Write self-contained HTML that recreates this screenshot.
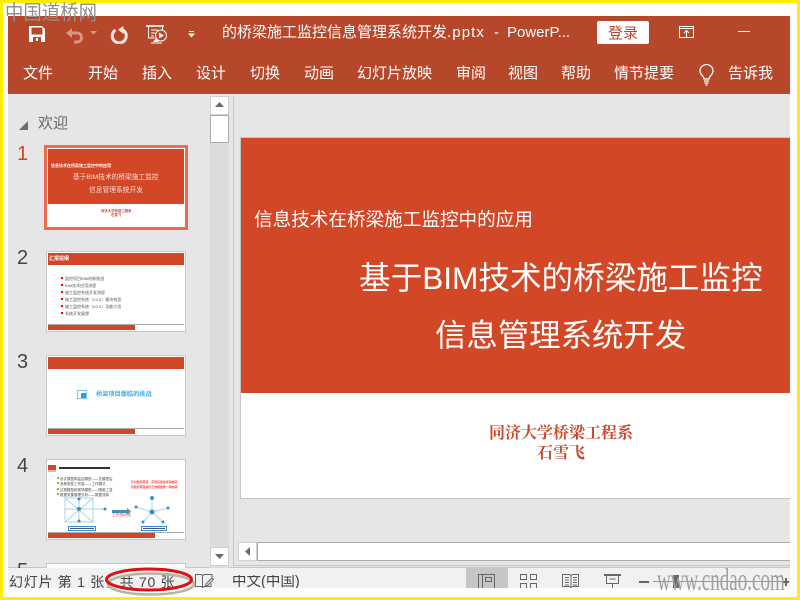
<!DOCTYPE html>
<html lang="zh">
<head>
<meta charset="utf-8">
<style>
html,body{margin:0;padding:0;width:800px;height:600px;overflow:hidden;background:#fff}
body{position:relative;font-family:"Liberation Sans","Noto Sans CJK SC",sans-serif}
.a,.t,svg{position:absolute}
.t{white-space:nowrap;line-height:1}
.m{color:#fff;font-size:15px;top:66px}
.n{color:#444;font-size:20px;left:17px}
.thumb{position:absolute;left:46px;width:140px;height:81px;background:#fff;border:1px solid #c6c6c6;box-sizing:border-box;overflow:hidden}
.bar1{position:absolute;left:1px;top:1px;width:136px;height:12px;background:#d24726}
.bar2{position:absolute;left:1px;top:73px;width:87px;height:5px;background:#d24726}
.line{position:absolute;left:1px;top:72px;width:136px;height:1px;background:#aaa}
.tiny{position:absolute;white-space:nowrap;line-height:1;font-size:5px}
.b{position:absolute;width:2px;height:2px;background:#e00}
</style>
</head>
<body>
<!-- yellow frame -->
<div class="a" style="left:0;top:0;width:800px;height:3px;background:#ffee00"></div>
<div class="a" style="left:0;top:0;width:3px;height:600px;background:#ffee00"></div>
<div class="a" style="right:0;top:0;width:3px;height:600px;background:#ffee00"></div>
<div class="a" style="left:0;top:597px;width:800px;height:3px;background:#ffee00"></div>

<!-- app chrome -->
<div class="a" style="left:8px;top:16px;width:782px;height:78px;background:#b7472a"></div>
<div class="a" style="left:8px;top:94px;width:782px;height:474px;background:#e6e6e6"></div>
<div class="a" style="left:8px;top:568px;width:782px;height:20px;background:#f1f1f1"></div>
<div class="a" style="left:8px;top:567px;width:782px;height:1px;background:#c6c6c6"></div>

<!-- watermark -->
<div class="t" style="left:5px;top:3px;font-size:18.400px;color:#8f8f8f;z-index:5;transform:scaleY(1.1);transform-origin:left top">中国道桥网</div>

<!-- QAT icons -->
<svg style="left:29px;top:26px" width="16" height="16" viewBox="0 0 16 16"><path fill="#fff" fill-rule="evenodd" d="M0 0h13l3 3v13H0zM2.500 1.500v7h11v-7zM4 11v5h8v-5zM7 12h2v3H7z"/></svg>
<svg style="left:65px;top:27px" width="33" height="17" viewBox="0 0 33 17"><path fill="none" stroke="#d8957f" stroke-width="3" d="M5 6h7c6 0 6 9 0 9h-3"/><path fill="#d8957f" d="M1 6l6-5v10z"/><path fill="#d8957f" d="M25 4h7l-3.500 3.500z"/></svg>
<svg style="left:110px;top:25px" width="18" height="19" viewBox="0 0 18 19"><path fill="none" stroke="#f2e5e0" stroke-width="3" d="M5.500 5a7 7 0 1 0 7.500 0"/><path fill="#f2e5e0" d="M13.500 1v8L8 4.500z"/></svg>
<svg style="left:146px;top:25px" width="22" height="19" viewBox="0 0 22 19"><path fill="none" stroke="#fff" stroke-width="1.500" d="M0 1h18"/><path fill="none" stroke="#fff" d="M2.500 1v12h6M16.500 1v4M5 5h7M5 8h4M5 11h3"/><circle cx="15" cy="10.500" r="5.500" fill="none" stroke="#fff"/><path fill="#fff" d="M13 7.500l5 3-5 3zM7 17l3-4 3 4z"/><path stroke="#fff" d="M5 18h11"/></svg>
<svg style="left:188px;top:30px" width="8" height="8" viewBox="0 0 8 8"><path stroke="#fff" d="M1 1.500h5"/><path fill="#fff" d="M0 3.500h7L3.500 7.500z"/></svg>

<!-- title -->
<div class="t" style="left:222px;top:25px;font-size:15px;color:#fff">的桥梁施工监控信息管理系统开发</div>
<div class="t" style="left:447px;top:25px;font-size:15px;color:#fff;letter-spacing:1.100px">.pptx</div>
<div class="t" style="left:494px;top:25px;font-size:15px;color:#fff">-</div>
<div class="t" style="left:507px;top:25px;font-size:15px;color:#fff">PowerP...</div>
<div class="a" style="left:597px;top:21px;width:52px;height:23px;background:#fff;border-radius:2px"></div>
<div class="t" style="left:608px;top:26px;font-size:15px;color:#b7472a">登录</div>
<svg style="left:679px;top:26px" width="16" height="13" viewBox="0 0 16 13"><path fill="none" stroke="#fff" d="M.500 .500h14v11H.500zM.500 2.500h14M7.500 11V5M5 7l2.500-2.500L10 7"/></svg>
<div class="a" style="left:738px;top:31px;width:12px;height:1px;background:#fff"></div>

<!-- ribbon tabs -->
<div class="t m" style="left:23px">文件</div>
<div class="t m" style="left:88px">开始</div>
<div class="t m" style="left:142px">插入</div>
<div class="t m" style="left:196px">设计</div>
<div class="t m" style="left:250px">切换</div>
<div class="t m" style="left:304px">动画</div>
<div class="t m" style="left:357px">幻灯片放映</div>
<div class="t m" style="left:456px">审阅</div>
<div class="t m" style="left:508px">视图</div>
<div class="t m" style="left:561px">帮助</div>
<div class="t m" style="left:614px">情节提要</div>
<svg style="left:698px;top:64px" width="18" height="22" viewBox="0 0 18 22"><path fill="none" stroke="#fff" stroke-width="1.300" d="M6 15c0-3-4-4-4-8a6.500 6.500 0 0 1 13 0c0 4-4 5-4 8z"/><path stroke="#fff" stroke-width="1.300" d="M6 17h5M6.500 19h4M7.500 21h2"/></svg>
<div class="t m" style="left:728px">告诉我</div>

<!-- thumbnail pane -->
<svg style="left:19px;top:121px" width="10" height="10" viewBox="0 0 10 10"><path fill="#6e6e6e" d="M9 0v9H0z"/></svg>
<div class="t" style="left:38px;top:116px;font-size:15px;color:#6a6a6a">欢迎</div>
<div class="t n" style="left:17px;top:144px;color:#c8492a">1</div>
<div class="t n" style="top:248px">2</div>
<div class="t n" style="top:352px">3</div>
<div class="t n" style="top:456px">4</div>
<div class="t n" style="top:561px;height:7px;overflow:hidden">5</div>

<!-- thumb 1 -->
<div class="a" style="left:44px;top:145px;width:144px;height:85px;background:#ee6c4d"></div>
<div class="a" style="left:47px;top:148px;width:138px;height:79px;background:#fff"></div>
<div class="a" style="left:48px;top:149px;width:136px;height:55px;background:#d24726"></div>
<div class="tiny" style="left:51px;top:164px;color:#fff;font-size:4px;font-weight:bold">信息技术在桥梁施工监控中的应用</div>
<div class="tiny" style="left:73px;top:175px;color:#f6dcd5;font-size:6.700px">基于BIM技术的桥梁施工监控</div>
<div class="tiny" style="left:89px;top:188px;color:#f6dcd5;font-size:6.750px">信息管理系统开发</div>
<div class="tiny" style="left:101px;top:210px;color:#c8492a;font-size:3.400px;font-weight:bold">同济大学桥梁工程系</div>
<div class="tiny" style="left:111px;top:214px;color:#c8492a;font-size:3.400px;font-weight:bold">石雪飞</div>

<!-- thumb 2 -->
<div class="thumb" style="top:251px">
  <div class="bar1"></div><div class="line"></div><div class="bar2"></div>
  <div class="tiny" style="left:2px;top:5px;color:#fff;font-size:5px;font-weight:bold">汇报提纲</div>
  <div class="b" style="left:14px;top:25px"></div><div class="b" style="left:14px;top:32px"></div><div class="b" style="left:14px;top:39px"></div><div class="b" style="left:14px;top:46px"></div><div class="b" style="left:14px;top:53px"></div><div class="b" style="left:14px;top:60px"></div>
  <div class="tiny" style="left:18px;top:23px;color:#555;line-height:7px;font-size:4px">监控项目BIM的新挑战<br>BIM技术应用流程<br>施工监控系统开发流程<br>施工监控系统（V2.0）模块构思<br>施工监控系统（V2.0）功能介绍<br>系统开发展望</div>
</div>

<!-- thumb 3 -->
<div class="thumb" style="top:355px">
  <div class="bar1"></div><div class="line"></div><div class="bar2"></div>
  <div class="a" style="left:30px;top:34px;width:8px;height:7px;border:1px solid #7cc4e8;background:#fff"></div>
  <div class="a" style="left:34px;top:37px;width:5px;height:5px;background:#3d9ad1"></div>
  <div class="tiny" style="left:49px;top:36px;color:#45b0e4;font-size:6.200px;font-weight:bold">桥梁项目面临的挑战</div>
</div>

<!-- thumb 4 -->
<div class="thumb" style="top:459px">
  <div class="tiny" style="left:13px;top:17px;color:#444;line-height:5.300px;font-size:3.500px">设计模型和监控模型——先模型后<br>多种类型工作量——工作模式<br>过程模型和现场模型——随施工变<br>数据采集管理分析——数据流转</div>
  <div class="tiny" style="left:84px;top:20px;color:#f33;line-height:5px;font-size:2.900px;font-weight:bold">针对监控项目，实现信息共享和协同<br>对监控项目进行工作模型统一和协调</div>
  <div class="tiny" style="left:65px;top:54px;color:#f33;font-size:3.800px">工作协同化</div>
</div>
<svg style="left:46px;top:459px" width="140" height="81" viewBox="46 459 140 81">
  <rect x="48" y="465" width="8" height="5" fill="#d24726"/><rect x="48" y="470" width="8" height="2" fill="#e4b3a5"/>
  <path d="M59 468h51" stroke="#333" stroke-width="2"/>
  <g fill="#7ab648"><rect x="57" y="477" width="2" height="2"/><rect x="57" y="482" width="2" height="2"/><rect x="57" y="488" width="2" height="2"/><rect x="57" y="493" width="2" height="2"/></g>
  <g stroke="#b5dcec" stroke-width="1.200" fill="none"><path d="M65 498h28v24H65zM65 509h40M79 498v24M65 498l28 24M93 498l-28 24"/><path d="M152 512L152 498M152 512L136 507M152 512L143 522M152 512L163 522M152 512L168 508"/></g>
  <path d="M112 510h15v3h-15z" fill="#4a8ab5"/><path d="M127 508l4 3.500-4 3.500z" fill="#4a8ab5"/>
  <g fill="#3d8fbf"><circle cx="79" cy="509" r="2"/><circle cx="79" cy="499" r="1.500"/><circle cx="79" cy="521" r="1.500"/><circle cx="105" cy="509" r="1.500"/><circle cx="152" cy="512" r="2.500"/><circle cx="152" cy="498" r="2"/><circle cx="136" cy="507" r="1.500"/><circle cx="143" cy="522" r="1.500"/><circle cx="163" cy="522" r="1.500"/><circle cx="168" cy="508" r="1.500"/></g>
  <rect x="68.500" y="526.500" width="27" height="4" fill="#fff" stroke="#2e8fe0"/>
  <rect x="141.500" y="526.500" width="25" height="4" fill="#fff" stroke="#2e8fe0"/>
  <path d="M70 528.500h24M143 528.500h22" stroke="#555"/>
  <rect x="48" y="533" width="107" height="5" fill="#d24726"/>
  <path d="M48 532.500h136" stroke="#aaa"/>
</svg>

<!-- thumb 5 -->
<div class="a" style="left:46px;top:563px;width:140px;height:5px;background:#fff;border:1px solid #c6c6c6;border-bottom:0;box-sizing:border-box"></div>

<!-- left scrollbar -->
<div class="a" style="left:210px;top:96px;width:19px;height:472px;background:#dcdcdc"></div>
<div class="a" style="left:210px;top:96px;width:19px;height:19px;background:#fff;border:1px solid #d0d0d0;box-sizing:border-box"></div>
<svg style="left:214px;top:102px" width="11" height="7" viewBox="0 0 11 7"><path fill="#6a6a6a" d="M5.500 0l4.500 5H1z"/></svg>
<div class="a" style="left:210px;top:115px;width:19px;height:28px;background:#fff;border:1px solid #ababab;box-sizing:border-box"></div>
<div class="a" style="left:210px;top:547px;width:19px;height:19px;background:#fff;border:1px solid #d0d0d0;box-sizing:border-box"></div>
<svg style="left:214px;top:554px" width="11" height="7" viewBox="0 0 11 7"><path fill="#6a6a6a" d="M1 0h9L5.500 5z"/></svg>
<div class="a" style="left:233px;top:96px;width:1px;height:470px;background:#c6c6c6"></div>

<!-- slide -->
<div class="a" style="left:240px;top:137px;width:550px;height:362px;background:#fff;border:1px solid #c4c4c4;border-right:0;box-sizing:border-box"></div>
<div class="a" style="left:241px;top:138px;width:549px;height:255px;background:#d24726"></div>
<div class="t" style="left:254px;top:211px;font-size:18.600px;color:#fff">信息技术在桥梁施工监控中的应用</div>
<div class="t" style="left:359px;top:263px;font-size:31.600px;color:#fff">基于BIM技术的桥梁施工监控</div>
<div class="t" style="left:435px;top:320px;font-size:31.400px;color:#fff">信息管理系统开发</div>
<div class="t" style="left:489px;top:426px;font-size:16px;font-weight:bold;color:#c8492a;font-family:'Liberation Serif','Noto Serif CJK SC',serif">同济大学桥梁工程系</div>
<div class="t" style="left:537px;top:446px;font-size:16px;font-weight:bold;color:#c8492a;font-family:'Liberation Serif','Noto Serif CJK SC',serif">石雪飞</div>

<!-- horizontal scrollbar -->
<div class="a" style="left:238px;top:542px;width:19px;height:19px;background:#fff;border:1px solid #d0d0d0;box-sizing:border-box"></div>
<svg style="left:244px;top:547px" width="7" height="10" viewBox="0 0 7 10"><path fill="#6a6a6a" d="M6 0v9L1 4.500z"/></svg>
<div class="a" style="left:257px;top:542px;width:533px;height:19px;background:#fff;border:1px solid #ababab;border-right:0;box-sizing:border-box"></div>
<div class="a" style="left:234px;top:565px;width:556px;height:1px;background:#c6c6c6"></div>

<!-- status bar -->
<div class="t" style="left:9px;top:575px;font-size:14px;letter-spacing:.72px;color:#444;height:13px;overflow:hidden">幻灯片 第 1 张，共 70 张</div>
<svg style="left:195px;top:574px" width="20" height="14" viewBox="0 0 20 14"><path fill="none" stroke="#666" d="M.500 .500h6l1 1v12l-1-1h-6zM8 1.500l1-1h8v4M8 13.500l1-1h7v-3M11 10l6-6 1.500 1.500-6 6-2 .5z"/></svg>
<div class="t" style="left:232px;top:575px;font-size:14.500px;color:#444;height:13px;overflow:hidden">中文(中国)</div>
<div class="a" style="left:466px;top:568px;width:42px;height:20px;background:#c6c6c6"></div>
<svg style="left:478px;top:574px" width="18" height="14" viewBox="0 0 18 14"><path fill="none" stroke="#666" d="M.500 14V.500h16V14M4.500 14V.500M7.500 3.500h6v4h-6z"/></svg>
<svg style="left:520px;top:574px" width="17" height="14" viewBox="0 0 17 14"><path fill="none" stroke="#666" d="M.500 .500h6v5h-6zM10.500 .500h6v5h-6zM.500 14V9.500h6V14M10.500 14V9.500h6V14"/></svg>
<svg style="left:562px;top:574px" width="18" height="14" viewBox="0 0 18 14"><path fill="none" stroke="#666" d="M.500 .500h7l1.500 1 1.500-1h6v12h-6l-1.500 1-1.500-1h-7zM9 1.500v11M3 3.500h4M3 6h4M3 8.500h4M3 11h4M11 3.500h4M11 6h4M11 8.500h4M11 11h4"/></svg>
<svg style="left:604px;top:573px" width="18" height="15" viewBox="0 0 18 15"><path stroke="#666" stroke-width="2" d="M0 2h17"/><path fill="none" stroke="#666" d="M2.500 3v7.500h12V3M8.500 10.500V15M5.500 6h6"/></svg>
<div class="a" style="left:639px;top:581px;width:10px;height:2px;background:#666"></div>
<div class="a" style="left:653px;top:581px;width:130px;height:1px;background:#999"></div>
<div class="a" style="left:673px;top:575px;width:6px;height:13px;background:#666"></div>
<div class="a" style="left:782px;top:581px;width:7px;height:2px;background:#666"></div>
<div class="a" style="left:785px;top:578px;width:2px;height:8px;background:#666"></div>
<div class="t" style="left:657px;top:563px;font-size:32px;color:#a0a0a0;font-family:'Liberation Serif',serif;transform:scaleX(.595);transform-origin:left top">www.cndao.com</div>

<!-- red ellipse annotation -->
<svg style="left:100px;top:564px" width="100" height="36" viewBox="0 0 100 36">
  <ellipse cx="50" cy="18" rx="43" ry="10.500" fill="none" stroke="#b5b5a5" stroke-width="2.500" transform="translate(1 2)"/>
  <ellipse cx="49" cy="15.500" rx="42.500" ry="10.500" fill="none" stroke="#e01010" stroke-width="3"/>
</svg>
</body>
</html>
